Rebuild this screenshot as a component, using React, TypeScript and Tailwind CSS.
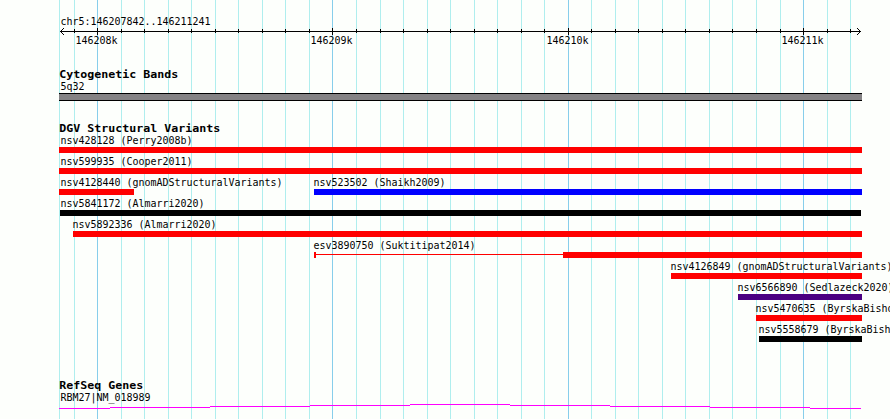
import type { ReactNode } from 'react';

const minorTicks = [
  74, 121, 144, 168, 191, 215, 238, 262, 285, 309, 356, 380, 403, 427, 450, 474, 497, 521, 544, 591, 615, 638, 662, 685,
  709, 732, 756, 780, 827, 850,
];
const majorTicks = [97, 332, 568, 803];

const scaleLabels = [
  { text: '146208k', x: 75 },
  { text: '146209k', x: 310 },
  { text: '146210k', x: 546 },
  { text: '146211k', x: 781 },
];

type Segment = { start: number; end: number; color: string; thin?: boolean };
type Feature = { label: string; x: number; segments: Segment[] };

const rows: Feature[][] = [
  [{ label: 'nsv428128 (Perry2008b)', x: 60, segments: [{ start: 59, end: 862, color: 'bg-[#ff0000]' }] }],
  [{ label: 'nsv599935 (Cooper2011)', x: 60, segments: [{ start: 59, end: 862, color: 'bg-[#ff0000]' }] }],
  [
    {
      label: 'nsv4128440 (gnomADStructuralVariants)',
      x: 60,
      segments: [{ start: 59, end: 134, color: 'bg-[#ff0000]' }],
    },
    { label: 'nsv523502 (Shaikh2009)', x: 313, segments: [{ start: 314, end: 862, color: 'bg-[#0000ff]' }] },
  ],
  [{ label: 'nsv5841172 (Almarri2020)', x: 60, segments: [{ start: 60, end: 861, color: 'bg-black' }] }],
  [{ label: 'nsv5892336 (Almarri2020)', x: 72, segments: [{ start: 73, end: 862, color: 'bg-[#ff0000]' }] }],
  [
    {
      label: 'esv3890750 (Suktitipat2014)',
      x: 313,
      segments: [
        { start: 314, end: 316, color: 'bg-[#ff0000]' },
        { start: 316, end: 563, color: 'bg-[#ff0000]', thin: true },
        { start: 563, end: 862, color: 'bg-[#ff0000]' },
      ],
    },
  ],
  [
    {
      label: 'nsv4126849 (gnomADStructuralVariants)',
      x: 670,
      segments: [{ start: 671, end: 862, color: 'bg-[#ff0000]' }],
    },
  ],
  [{ label: 'nsv6566890 (Sedlazeck2020)', x: 737, segments: [{ start: 738, end: 862, color: 'bg-[#4b0082]' }] }],
  [{ label: 'nsv5470635 (ByrskaBisho', x: 755, segments: [{ start: 756, end: 862, color: 'bg-[#ff0000]' }] }],
  [{ label: 'nsv5558679 (ByrskaBish', x: 758, segments: [{ start: 759, end: 862, color: 'bg-black' }] }],
];

const GridLines = () => (
  <svg className="absolute inset-0" width="890" height="419" shapeRendering="crispEdges">
    <rect x="59" y="0" width="1" height="419" fill="#afeeee" />
    {minorTicks.map((x) => (
      <rect key={x} x={x} y="0" width="1" height="419" fill="#afeeee" />
    ))}
    {majorTicks.map((x) => (
      <rect key={x} x={x} y="0" width="1" height="419" fill="#87ceeb" />
    ))}
  </svg>
);

const Ruler = () => (
  <svg className="block" width="890" height="7" shapeRendering="crispEdges">
    <rect x="60" y="3" width="801" height="1" />
    {minorTicks.map((x) => (
      <rect key={x} x={x} y="1" width="1" height="4" />
    ))}
    {majorTicks.map((x) => (
      <rect key={x} x={x} y="0" width="1" height="7" />
    ))}
    {[1, 2, 3].map((d) => (
      <g key={d}>
        <rect x={60 + d} y={3 - d} width="1" height="1" />
        <rect x={60 + d} y={3 + d} width="1" height="1" />
        <rect x={860 - d} y={3 - d} width="1" height="1" />
        <rect x={860 - d} y={3 + d} width="1" height="1" />
      </g>
    ))}
  </svg>
);

// 6px wide cells
const Label = ({ children }: { children: ReactNode }) => (
  <div className="h-[13px] origin-left translate-x-[0.5px] scale-x-[0.906] text-[11px] leading-[13px] whitespace-pre">
    {children}
  </div>
);

// 7px wide cells
const Heading = ({ children }: { children: ReactNode }) => (
  <h2 className="ml-[59px] h-3 origin-left translate-x-[0.25px] scale-x-[1.057] text-[11px] leading-[13px] font-bold whitespace-pre">
    {children}
  </h2>
);

const FeatureRow = ({ features }: { features: Feature[] }) => {
  const segments = features.flatMap((feature) => feature.segments);
  return (
    <div className="h-[21px]">
      <div className="grid h-[13px]">
        {features.map((feature) => (
          <div key={feature.label} className="col-start-1 row-start-1" style={{ paddingLeft: feature.x }}>
            <Label>{feature.label}</Label>
          </div>
        ))}
      </div>
      <div className="flex h-1.5">
        {segments.map((segment, index) => (
          <div
            key={segment.start}
            className={`shrink-0 ${segment.thin ? 'mt-0.5 h-px' : 'h-1.5'} ${segment.color}`}
            style={{
              marginLeft: segment.start - (index > 0 ? segments[index - 1].end : 0),
              width: segment.end - segment.start,
            }}
          />
        ))}
      </div>
    </div>
  );
};

const App = () => {
  return (
    <div className="relative h-[419px] w-[890px] overflow-hidden bg-[#fdfffc] font-['DejaVu_Sans_Mono',monospace] text-black">
      <GridLines />
      <div className="relative pt-[15px]">
        <div className="pl-[60px]">
          <Label>chr5:146207842..146211241</Label>
        </div>
        <Ruler />
        <div className="-mt-px grid h-[13px]">
          {scaleLabels.map(({ text, x }) => (
            <div key={text} className="col-start-1 row-start-1" style={{ paddingLeft: x }}>
              <Label>{text}</Label>
            </div>
          ))}
        </div>

        <section className="mt-[21px]">
          <Heading>Cytogenetic Bands</Heading>
          <div className="h-[13px] pl-[60px]">
            <Label>5q32</Label>
          </div>
          <div className="ml-[59px] h-2 w-[803px] border-y border-black bg-[#848284]" />
        </section>

        <section className="mt-[21px]">
          <Heading>DGV Structural Variants</Heading>
          {rows.map((features) => (
            <FeatureRow key={features[0].label} features={features} />
          ))}
        </section>

        <section className="mt-[35px]">
          <Heading>RefSeq Genes</Heading>
          <div className="h-[13px] pl-[60px]">
            <Label>RBM27|NM_018989</Label>
          </div>
          <svg className="block" width="890" height="5" shapeRendering="crispEdges" fill="#ff00ff">
            <rect x="59" y="4" width="51" height="1" />
            <rect x="110" y="3" width="100" height="1" />
            <rect x="210" y="2" width="100" height="1" />
            <rect x="310" y="1" width="100" height="1" />
            <rect x="410" y="0" width="100" height="1" />
            <rect x="510" y="1" width="100" height="1" />
            <rect x="610" y="2" width="100" height="1" />
            <rect x="710" y="3" width="100" height="1" />
            <rect x="810" y="4" width="51" height="1" />
          </svg>
        </section>
      </div>
    </div>
  );
};

export default App;
